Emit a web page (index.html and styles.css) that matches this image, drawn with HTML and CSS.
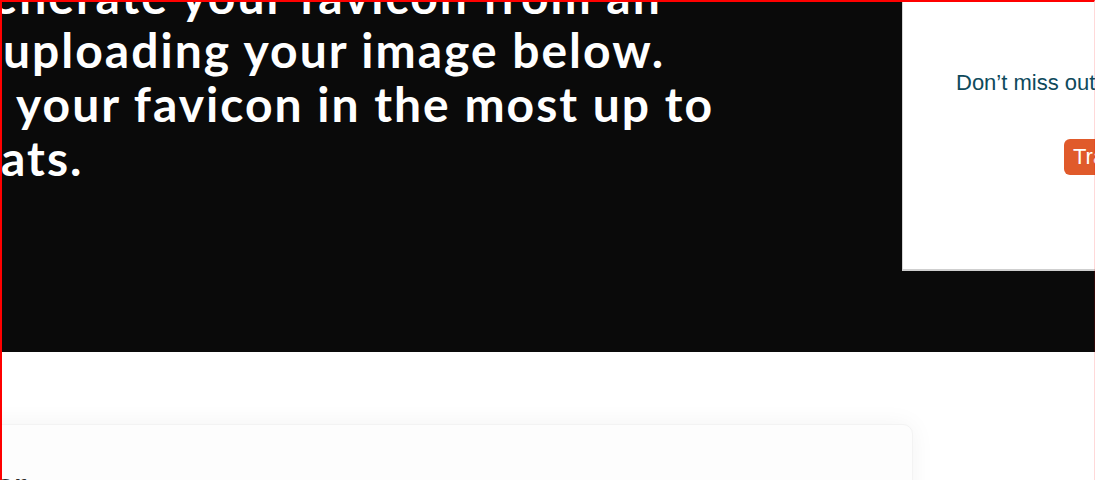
FILE: index.html
```html
<!DOCTYPE html>
<html lang="en">
<head>
<meta charset="utf-8">
<title>Favicon Generator</title>
<link rel="stylesheet" href="styles.css">
</head>
<body>
<div class="frame"></div>
<header class="hero">
  <h1 class="hero-title">
    <span class="line l1">Generate your favicon from an</span>
    <span class="line l2">uploading your image below.</span>
    <span class="line l3">your favicon in the most up to</span>
    <span class="line l4">ats.</span>
  </h1>
  <aside class="promo">
    <p class="promo-text">Don’t miss out on our latest tools</p>
    <a class="promo-btn" href="#">Transform now</a>
  </aside>
</header>
<main class="content">
  <section class="card">
    <h2 class="card-title">Favicon Generator</h2>
  </section>
</main>
</body>
</html>
```
FILE: styles.css
```css
html, body {
  margin: 0;
  padding: 0;
  height: 100%;
  overflow: hidden;
  background: #ffffff;
}
body {
  font-family: "Liberation Sans", Arial, sans-serif;
  position: relative;
}
.frame {
  position: absolute;
  inset: 0;
  border-top: 2px solid #ff0000;
  border-left: 2px solid #ff0000;
  border-right: 1px solid rgba(255, 0, 0, 0.15);
  pointer-events: none;
  z-index: 10;
}
.hero {
  background: #0a0a0a;
  height: 352px;
  display: flex;
  justify-content: space-between;
  align-items: flex-start;
  overflow: hidden;
}
.hero-title {
  margin: -31px 0 0 0;
  font-family: Lato, "Open Sans", sans-serif;
  font-weight: 700;
  font-size: 48px;
  line-height: 54px;
  letter-spacing: 2px;
  color: #ffffff;
  white-space: nowrap;
}
.line { display: block; }
.l1 { margin-left: -45px; }
.l2 { margin-left: 3px; }
.l3 { margin-left: 16px; }
.l4 { margin-left: 1px; }
.promo {
  width: 220px;
  flex-shrink: 0;
  margin-right: -27px;
  height: 269px;
  background: #ffffff;
  border-left: 1px solid #d6d6d6;
  box-shadow: 0 2px 0 #cfcfcf;
  padding-left: 53px;
  box-sizing: border-box;
  overflow: hidden;
  white-space: nowrap;
}
.promo-text {
  margin: 70px 0 0 0;
  font-size: 22px;
  color: #0e4a5c;
}
.promo-btn {
  display: inline-block;
  margin: 43px 0 0 108px;
  height: 36px;
  line-height: 36px;
  padding: 0 9px;
  border-radius: 6px;
  background: #e05a2b;
  color: #ffffff;
  font-size: 22px;
  text-decoration: none;
}
.content {
  padding-top: 72px;
}
.card {
  width: 940px;
  margin-left: -29px;
  height: 200px;
  background: #fdfdfd;
  border: 1px solid #f3f3f3;
  border-radius: 10px;
  box-shadow: 0 0 24px rgba(0, 0, 0, 0.05);
  overflow: hidden;
}
.card-title {
  margin: 39px 0 0 -207px;
  font-family: Lato, sans-serif;
  font-weight: 700;
  font-size: 32px;
  color: #2b2b2b;
  white-space: nowrap;
}
```
